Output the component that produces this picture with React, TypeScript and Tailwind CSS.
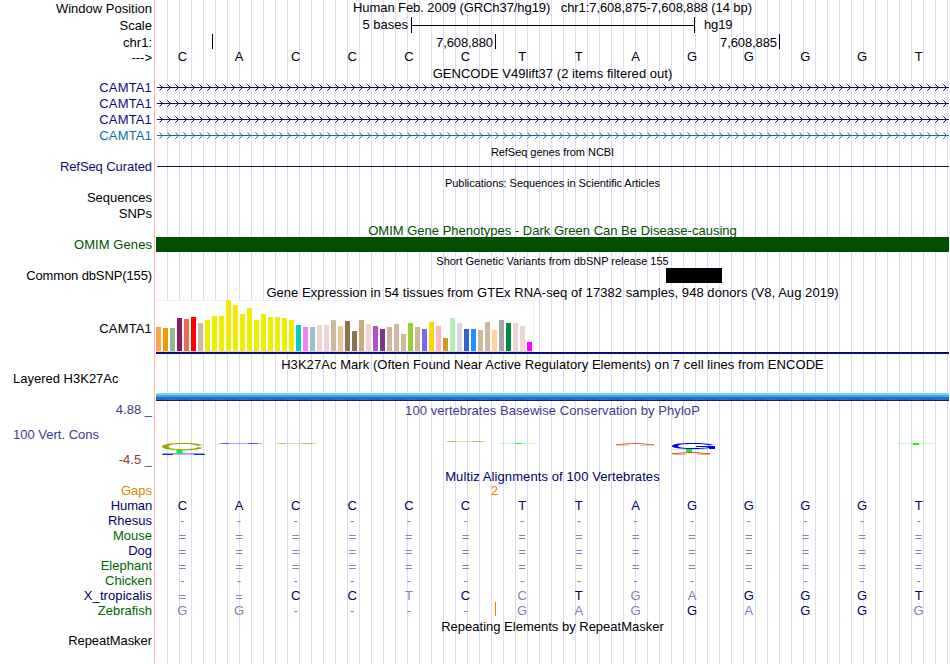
import React from 'react';
import clsx from 'clsx';

// Left hand labels. The height is the distance to the previous label.
const LABELS = [
  { text: 'Window Position', style: 'h-[16px]' },
  { text: 'Scale', style: 'h-[17px]' },
  { text: 'chr1:', style: 'h-[17px]' },
  { text: '--->', style: 'h-[15px]' },
  { text: 'CAMTA1', style: 'h-[30px] tracking-[0.15px] text-[#0c0c78]' },
  { text: 'CAMTA1', style: 'h-[16px] tracking-[0.15px] text-[#0c0c78]' },
  { text: 'CAMTA1', style: 'h-[16px] tracking-[0.15px] text-[#0c0c78]' },
  { text: 'CAMTA1', style: 'h-[16px] tracking-[0.15px] text-[#0c6eaf]' },
  { text: 'RefSeq Curated', style: 'h-[31px] tracking-[-0.08px] text-[#0c0c78]' },
  { text: 'Sequences', style: 'h-[31px]' },
  { text: 'SNPs', style: 'h-[16px]' },
  { text: 'OMIM Genes', style: 'h-[31px] tracking-[0.07px] text-[#005000]' },
  { text: 'Common dbSNP(155)', style: 'h-[31px] tracking-[-0.12px]' },
  { text: 'CAMTA1', style: 'h-[53px] tracking-[0.15px]' },
  { text: 'Layered H3K27Ac', style: 'h-[50px] self-start pl-[13px]' },
  { text: '4.88 _', style: 'h-[31px] text-[#3c3c8c]' },
  { text: '100 Vert. Cons', style: 'h-[25px] self-start pl-[13px] text-[#3c3c8c]' },
  { text: '-4.5 _', style: 'h-[25px] text-[#8c3c3c]' },
  { text: 'Gaps', style: 'h-[31px] text-[#f08200]' },
  { text: 'Human', style: 'h-[15px] tracking-[-0.15px] text-[#000064]' },
  { text: 'Rhesus', style: 'h-[15px] text-[#000064]' },
  { text: 'Mouse', style: 'h-[15px] text-[#006400]' },
  { text: 'Dog', style: 'h-[15px] text-[#000064]' },
  { text: 'Elephant', style: 'h-[15px] text-[#006400]' },
  { text: 'Chicken', style: 'h-[15px] text-[#006400]' },
  { text: 'X_tropicalis', style: 'h-[15px] tracking-[0.08px] text-[#000064]' },
  { text: 'Zebrafish', style: 'h-[15px] text-[#006400]' },
  { text: 'RepeatMasker', style: 'h-[30px] tracking-[-0.06px]' },
];

const SEQUENCE = 'CACCCCTTAGGGGT';

// Lower case marks a base that differs from the human one
const ALIGNMENTS = [
  { species: 'Human', bases: 'CACCCCTTAGGGGT' },
  { species: 'Rhesus', bases: '--------------' },
  { species: 'Mouse', bases: '==============' },
  { species: 'Dog', bases: '==============' },
  { species: 'Elephant', bases: '==============' },
  { species: 'Chicken', bases: '--------------' },
  { species: 'X_tropicalis', bases: '==CCtCcTgaGGGT' },
  { species: 'Zebrafish', bases: 'gg----gagGaGGg' },
];

const TISSUES: [string, number][] = [
  ['#ffa54f', 24], ['#ee9a00', 23], ['#8fbc8f', 23], ['#8b1c62', 33], ['#ee6a50', 32], ['#ff0000', 34],
  ['#cdb79e', 28], ['#eeee00', 31], ['#eeee00', 35], ['#eeee00', 35], ['#eeee00', 51], ['#eeee00', 46],
  ['#eeee00', 37], ['#eeee00', 43], ['#eeee00', 31], ['#eeee00', 37], ['#eeee00', 34], ['#eeee00', 34],
  ['#eeee00', 33], ['#eeee00', 31], ['#00cdcd', 26], ['#ee82ee', 24], ['#9ac0cd', 24], ['#eed5d2', 26],
  ['#eed5d2', 26], ['#cdb79e', 31], ['#eec591', 25], ['#8b7355', 30], ['#8b7355', 20], ['#cdaa7d', 31],
  ['#eed5d2', 27], ['#b452cd', 25], ['#7a378b', 22], ['#cdb79e', 24], ['#cdb79e', 27], ['#cdb79e', 17],
  ['#9acd32', 28], ['#cdb79e', 24], ['#7a67ee', 22], ['#ffd700', 29], ['#ffb6c1', 25], ['#cd9b1d', 13],
  ['#b4eeb4', 33], ['#d9d9d9', 28], ['#3a5fcd', 22], ['#1e90ff', 22], ['#cdb79e', 21], ['#cdb79e', 29],
  ['#ffd39b', 21], ['#a6a6a6', 31], ['#008b45', 28], ['#eed5d2', 28], ['#eed5d2', 25], ['#ff00ff', 9],
];

const Title: React.FC<{ className?: string; small?: boolean; children: React.ReactNode }> = ({ className, small, children }) => (
  <div
    className={clsx(
      'text-center whitespace-pre',
      small ? 'text-[11px] leading-[13px]' : 'text-[13px] leading-[15px]',
      className
    )}
  >
    {children}
  </div>
);

const Bases: React.FC<{ bases: string }> = ({ bases }) => (
  <div className="-ml-[2px] mr-[2px] grid h-[15px] grid-cols-[repeat(14,minmax(0,1fr))] text-center">
    {bases.split('').map((base, i) => (
      <span key={i} className={clsx(/[a-z=-]/.test(base) && 'text-[#8282b4]', base === '=' && 'pt-px')}>
        {base.toUpperCase()}
      </span>
    ))}
  </div>
);

const GeneTrack: React.FC<{ color: string }> = ({ color }) => (
  <svg className="block" width="793" height="16" shapeRendering="crispEdges">
    <rect x="1" y="7" width="792" height="1" fill={color} />
    {Array.from({ length: 99 }, (_, i) => (
      <g key={i} fill={color} transform={`translate(${3 + i * 8} 4)`}>
        <rect x="0" y="0" width="1" height="1" opacity="0.5" />
        <rect x="1" y="1" width="1" height="1" />
        <rect x="2" y="2" width="1" height="1" />
        <rect x="2" y="4" width="1" height="1" />
        <rect x="1" y="5" width="1" height="1" />
        <rect x="0" y="6" width="1" height="1" opacity="0.5" />
      </g>
    ))}
  </svg>
);

// Thin streak that fades out towards both ends
const Streak: React.FC<{ x: number; y: number; width: number; color: string }> = ({ x, y, width, color }) => (
  <g fill={color}>
    <rect x={x} y={y} width={width} height="1" opacity="0.35" />
    <rect x={x + 3} y={y} width="7" height="1" opacity="0.5" />
    <rect x={x + width - 14} y={y} width="10" height="1" opacity="0.5" />
  </g>
);

const GreenMark: React.FC<{ x: number; y: number; height: number }> = ({ x, y, height }) => (
  <g fill="#00ff00">
    <rect x={x} y={y} width="37" height="1" opacity="0.25" />
    <rect x={x + 15.5} y={y} width="6" height={height} />
  </g>
);

const ConservationLogo: React.FC = () => (
  <svg className="block" width="793" height="20">
    {/* Position 1 */}
    <g fill="#a0a000">
      <path d="M47 5.2 C43 3.6 36 3 27 3 C14 3 6 4.2 6 6.6 C6 9 14 10.2 27 10.2 C37 10.2 45 9.4 47 7.8 L42 7.3 C39 8.7 34 9.2 27 9.2 C18 9.2 12.500 8.500 12.500 6.600 C12.500 4.700 18 4 27 4 C34 4 39 4.500 42 5.700 Z" />
    </g>
    <GreenMark x={5} y={10} height={3} />
    <rect x="7" y="13" width="41" height="1" fill="#0000ff" opacity="0.4" />
    <path d="M6 14 H17 V15 H6 Z M38 14 H49 V15 H38 Z" fill="#0000ff" opacity="0.9" />
    <rect x="17" y="14" width="21" height="1" fill="#0000ff" opacity="0.25" />

    {/* Positions 2, 3, 6 and 7 */}
    <Streak x={63} y={3} width={43} color="#0000ff" />
    <Streak x={120} y={3} width={40} color="#a0a000" />
    <Streak x={290} y={1} width={40} color="#a0a000" />
    <GreenMark x={344} y={3} height={1} />

    {/* Position 9 */}
    <path d="M460 4.500 C472 4.500 468 3.500 479 3.500 C490 3.500 486 4.500 498 4.500" fill="none" stroke="#ff0000" strokeOpacity="0.7" />
    <path d="M461 5.300 H474 M484 5.300 H498" fill="none" stroke="#a0a000" strokeOpacity="0.5" strokeWidth="0.8" />

    {/* Position 10 */}
    <path d="M558 5 C552 3.500 547 3 537 3 C523 3 516 4.200 516 6 C516 8 523 9 537 9 C545 9 550 8.600 553 8 V9 H559 V6 H540 V7 H553 C550 7.700 545 8.100 537 8.100 C527 8.100 522 7.500 522 6 C522 4.600 527 3.900 537 3.900 C546 3.900 550 4.400 553 5.300 Z" fill="#0000ff" />
    <GreenMark x={514.500} y={9} height={3} />
    <path d="M516 13.500 C528 13.500 524 12.500 535 12.500 C546 12.500 542 13.500 554 13.500" fill="none" stroke="#ff0000" strokeOpacity="0.8" />
    <path d="M517 14.300 H530 M541 14.300 H554" fill="none" stroke="#a0a000" strokeOpacity="0.7" />

    {/* Position 14 */}
    <GreenMark x={741.500} y={3} height={2} />
  </svg>
);

const App: React.FC = () => {
  return (
    <div className="flex h-[664px] w-[950px] overflow-hidden bg-white font-['Liberation_Sans',Arial,sans-serif] text-[13px] leading-[15px] text-black">
      {/* Track labels */}
      <div className="flex w-[154px] shrink-0 flex-col items-end pr-[2px]">
        {LABELS.map(({ text, style }, i) => (
          <div key={i} className={clsx('flex shrink-0 items-end whitespace-pre', style)}>
            {text}
          </div>
        ))}
      </div>
      <div className="mr-px w-px shrink-0 bg-[#ffb4b4]" />

      {/* Tracks */}
      <div className="w-[793px] shrink-0 bg-[repeating-linear-gradient(to_right,transparent_0px,transparent_11px,#dcdcf8_11px,#dcdcf8_12px)]">
        <Title className="h-[17px] tracking-[-0.08px]">{'Human Feb. 2009 (GRCh37/hg19)   chr1:7,608,875-7,608,888 (14 bp)'}</Title>

        {/* Scale */}
        <div className="flex h-4">
          <div className="w-[255px] pr-[3px] text-right">5 bases</div>
          <div className="flex h-4 w-[284px] items-center border-x border-black">
            <div className="h-px w-full bg-black" />
          </div>
          <div className="pl-[9px] tracking-[-0.15px]">hg19</div>
        </div>

        {/* Chromosome position */}
        <div className="flex h-4 pt-px">
          <div className="h-[15px] w-[57px] border-r border-black" />
          <div className="h-[15px] w-[283px] border-r border-black pt-px pr-[2px] text-right tracking-[-0.1px]">7,608,880</div>
          <div className="h-[15px] w-[284px] border-r border-black pt-px pr-[2px] text-right tracking-[-0.1px]">7,608,885</div>
        </div>
        <Bases bases={SEQUENCE} />

        <Title className="h-4 pt-[2px] tracking-[0.03px]">GENCODE V49lift37 (2 items filtered out)</Title>
        <GeneTrack color="#0c0c78" />
        <GeneTrack color="#0c0c78" />
        <GeneTrack color="#0c0c78" />
        <GeneTrack color="#0c6eaf" />

        <Title small className="h-4 pt-[2px] tracking-[-0.04px]">RefSeq genes from NCBI</Title>
        <div className="h-4 pt-[6px] pl-px">
          <div className="h-px bg-[#0c0c78]" />
        </div>

        <Title small className="h-[47px] pt-px tracking-[-0.06px]">Publications: Sequences in Scientific Articles</Title>

        <Title className="h-[14px] text-[#005000]">OMIM Gene Phenotypes - Dark Green Can Be Disease-causing</Title>
        <div className="h-[15px] bg-[#005000]" />

        <Title small className="h-4 pt-[3px] tracking-[-0.02px]">Short Genetic Variants from dbSNP release 155</Title>
        <div className="ml-[510px] h-[15px] w-14 bg-black" />

        <Title className="h-[17px] pt-[2px] tracking-[0.055px]">
          Gene Expression in 54 tissues from GTEx RNA-seq of 17382 samples, 948 donors (V8, Aug 2019)
        </Title>
        <div className="h-[54px] border-b-2 border-[#0c0c78]">
          <div className="flex h-[52px] w-[378px] items-end gap-[2px] border-t border-r border-b border-[#f0f0f0] border-b-[#d8d8d8] bg-white">
            {TISSUES.map(([color, height], i) => (
              <div key={i} className="w-[5px] shrink-0" style={{ height, backgroundColor: color }} />
            ))}
          </div>
        </div>

        <Title className="h-[39px] pt-[3px] tracking-[0.06px]">
          H3K27Ac Mark (Often Found Near Active Regulatory Elements) on 7 cell lines from ENCODE
        </Title>
        <div className="h-[2px] bg-[#80d0ff]" />
        <div className="h-[2px] bg-[#32b4be]" />
        <div className="h-[3px] bg-[#3264dc]" />
        <div className="h-px bg-[#1e1e46]" />

        <Title className="h-[39px] pt-[2px] tracking-[0.06px] text-[#3c3c8c]">100 vertebrates Basewise Conservation by PhyloP</Title>
        <ConservationLogo />

        <Title className="mt-[9px] h-[14px] tracking-[0.1px] text-[#000064]">Multiz Alignments of 100 Vertebrates</Title>
        <div className="h-[15px] pl-[335px] text-[#f08200]">2</div>
        <div className="relative text-[#000064]">
          {ALIGNMENTS.map(({ species, bases }) => (
            <Bases key={species} bases={bases} />
          ))}
          {/* Insertion marker */}
          <div className="absolute bottom-[2px] left-[339px] h-[14px] w-px bg-[#f08200]" />
        </div>

        <Title className="pt-px">Repeating Elements by RepeatMasker</Title>
      </div>
    </div>
  );
};

export default App;
